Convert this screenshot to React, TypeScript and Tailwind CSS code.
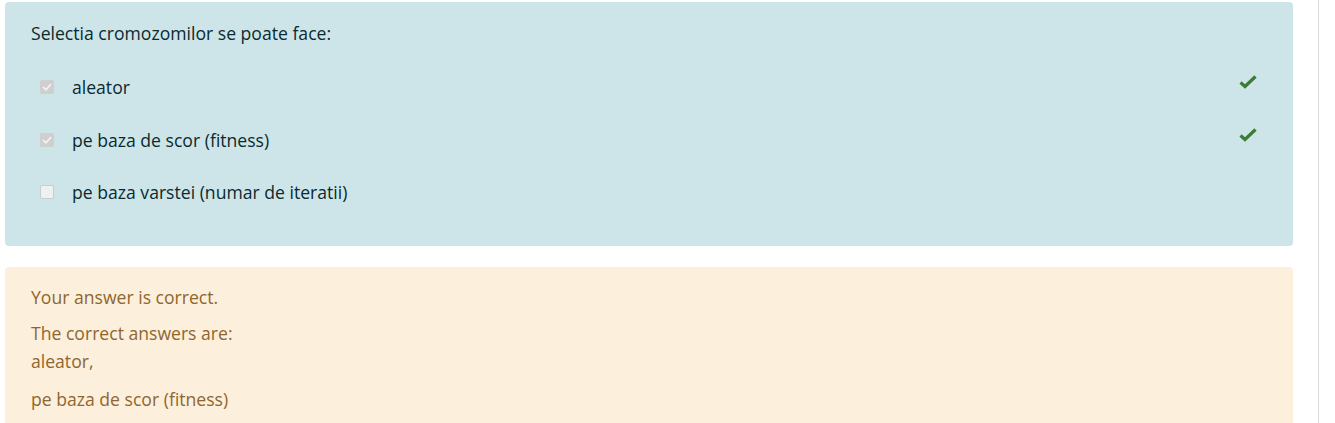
import React from "react";

function Check() {
  return (
    <svg width="18" height="14" viewBox="0 0 18 14" className="block">
      <path d="M1.5 7.5 L6 11.5 L16.5 1.5" fill="none" stroke="#3b7d36" strokeWidth="3.2" strokeLinejoin="miter" />
    </svg>
  );
}

function Box({ checked }: { checked: boolean }) {
  return checked ? (
    <div className="w-[14px] h-[14px] rounded-[2px] bg-[#cfcfcf] flex items-center justify-center">
      <svg width="10" height="8" viewBox="0 0 10 8">
        <path d="M1 4 L4 6.8 L9 1" fill="none" stroke="#f4f4f4" strokeWidth="1.6" />
      </svg>
    </div>
  ) : (
    <div className="w-[14px] h-[14px] rounded-[2px] bg-[#eef1f2] border border-[#c9cdcf]" />
  );
}

export default function App() {
  const opts = [
    { t: "aleator", c: true },
    { t: "pe baza de scor (fitness)", c: true },
    { t: "pe baza varstei (numar de iteratii)", c: false },
  ];
  return (
    <div className="flex w-[1335px] h-[423px] overflow-hidden bg-white" style={{ fontFamily: '"Open Sans", sans-serif' }}>
      <div className="w-[1318px] pl-[5px] pr-[25px] pt-[2px] shrink-0">
        <div className="bg-[#cde5e9] rounded-[4px] h-[244px] pl-[26px] pr-[36px] pt-[19px] text-[#0a2a2f] text-[17.6px] leading-[24px]">
          <div>Selectia cromozomilor se poate face:</div>
          <div className="mt-[30px] flex flex-col gap-[28.5px]">
            {opts.map((o) => (
              <div key={o.t} className="flex items-center h-[24px]">
                <div className="ml-[9px] w-[32px]"><Box checked={o.c} /></div>
                <div className="flex-1">{o.t}</div>
                {o.c && <div className="-mt-[10px]"><Check /></div>}
              </div>
            ))}
          </div>
        </div>
        <div className="mt-[21px] bg-[#fcefdc] rounded-t-[4px] h-[200px] pl-[26px] pt-[16px] text-[#8e662e] text-[17.6px] leading-[28px]">
          <div>Your answer is correct.</div>
          <div className="mt-[8px]">The correct answers are:</div>
          <div>aleator,</div>
          <div className="mt-[10px]">pe baza de scor (fitness)</div>
        </div>
      </div>
      <div className="w-px bg-[#dadada] h-full" />
    </div>
  );
}
